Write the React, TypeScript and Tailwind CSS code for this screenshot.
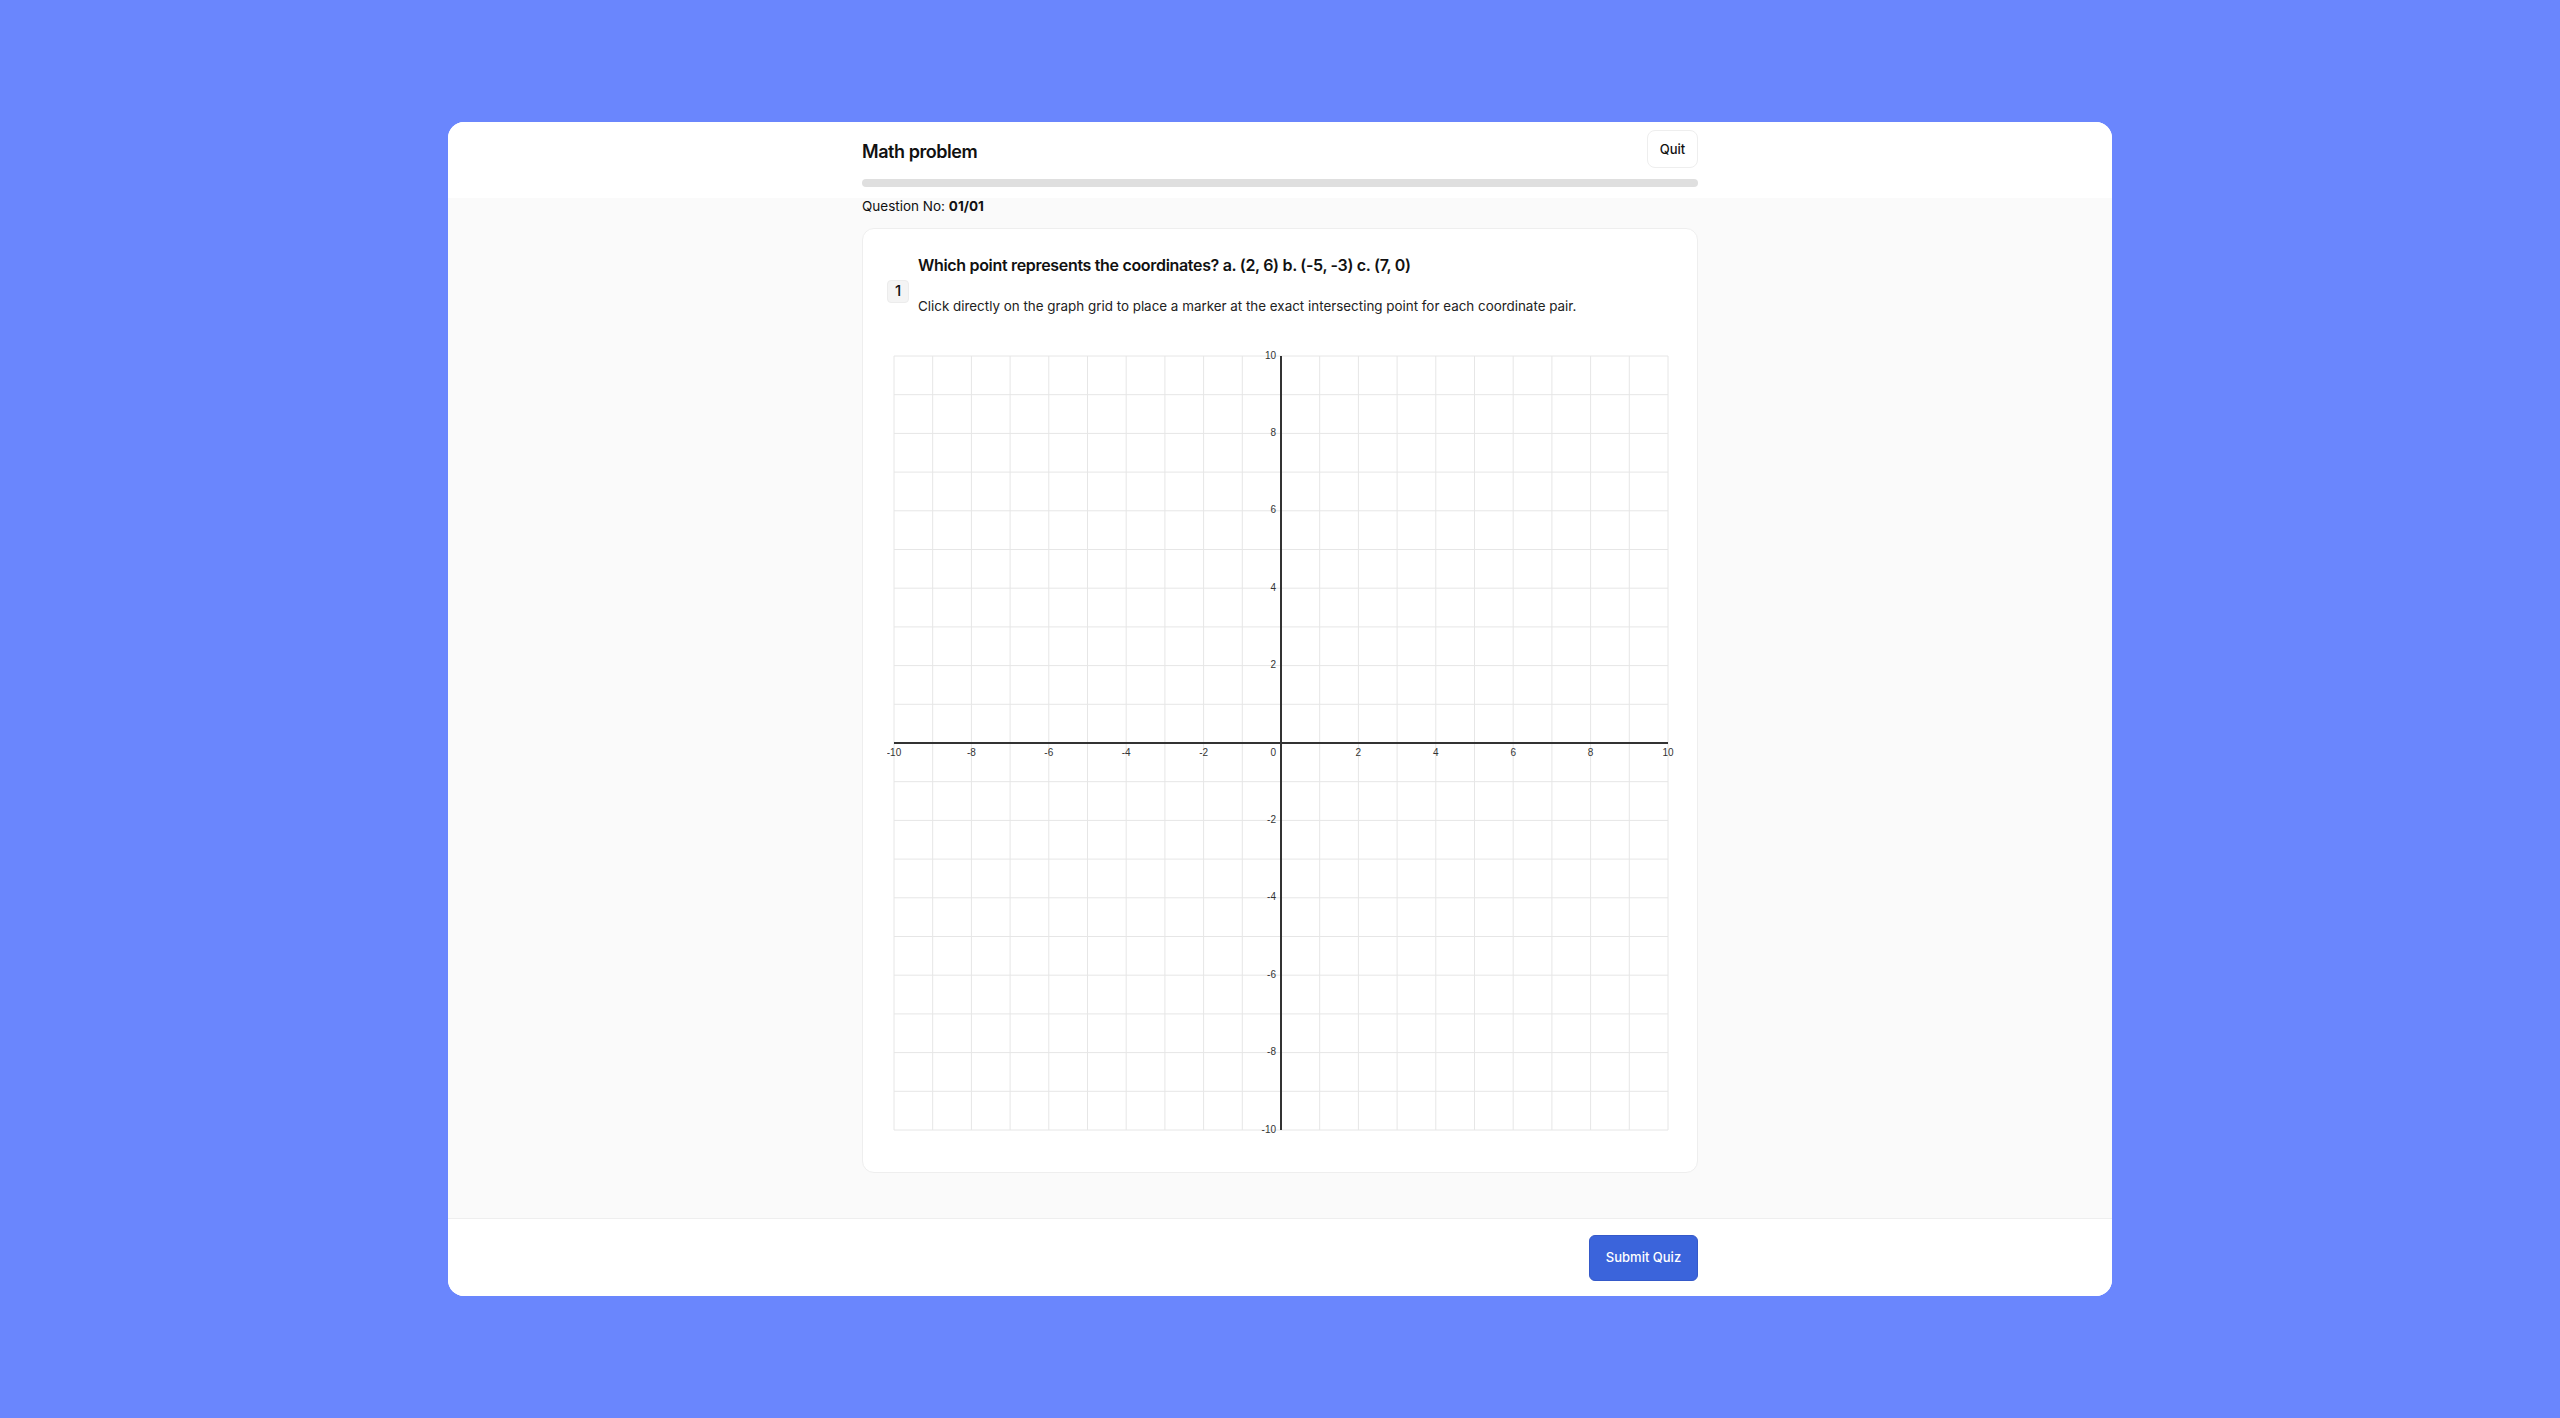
import React from 'react';

const CELL = 38.7;
const OX = 7;
const OY = 15;
const SIZE = CELL * 20;
const AXIS_X = OX + CELL * 10;
const AXIS_Y = OY + CELL * 10;
const TICKS = [-10, -8, -6, -4, -2, 2, 4, 6, 8, 10];

function Graph() {
  const lines = Array.from({ length: 21 }, (_, i) => i);
  return (
    <svg width={788} height={807} viewBox="0 0 788 807" className="block">
      {lines.map((i) => (
        <line
          key={`v${i}`}
          x1={OX + i * CELL}
          x2={OX + i * CELL}
          y1={OY}
          y2={OY + SIZE}
          stroke="#e6e6e6"
          strokeWidth={1}
        />
      ))}
      {lines.map((i) => (
        <line
          key={`h${i}`}
          x1={OX}
          x2={OX + SIZE}
          y1={OY + i * CELL}
          y2={OY + i * CELL}
          stroke="#e6e6e6"
          strokeWidth={1}
        />
      ))}
      <line x1={OX} x2={OX + SIZE} y1={AXIS_Y} y2={AXIS_Y} stroke="#333" strokeWidth={2} />
      <line x1={AXIS_X} x2={AXIS_X} y1={OY} y2={OY + SIZE} stroke="#333" strokeWidth={2} />
      <g fontFamily='"Liberation Sans", Arial, sans-serif' fontSize={10} fill="#333">
        {TICKS.map((v) => (
          <text key={`x${v}`} x={AXIS_X + v * CELL} y={AXIS_Y + 10} textAnchor="middle" dominantBaseline="middle">
            {v}
          </text>
        ))}
        {TICKS.map((v) => (
          <text key={`y${v}`} x={AXIS_X - 5} y={AXIS_Y - v * CELL} textAnchor="end" dominantBaseline="middle">
            {v}
          </text>
        ))}
        <text x={AXIS_X - 5} y={AXIS_Y + 10} textAnchor="end" dominantBaseline="middle">
          0
        </text>
      </g>
    </svg>
  );
}

export default function App() {
  return (
    <div
      className="flex h-[1418px] w-full items-center justify-center bg-[#6a86fd] text-[#111]"
      style={{ fontFamily: 'Inter, "Noto Sans", sans-serif' }}
    >
      <div className="flex h-[1174px] w-[1664px] flex-col overflow-hidden rounded-2xl bg-white">
        <header className="flex justify-center bg-white pt-2 pb-[11px]">
          <div className="flex w-[836px] flex-col gap-[11px]">
            <div className="flex items-center justify-between">
              <h1 className="pt-[5px] text-[18px] leading-7 font-semibold tracking-tight">Math problem</h1>
              <button className="h-[38px] w-[51px] rounded-lg border border-[#eeeeee] bg-white pt-[2px] text-[13px] font-medium">
                Quit
              </button>
            </div>
            <div className="h-2 w-full rounded-full bg-[#dfdfdf]" />
          </div>
        </header>

        <main className="flex flex-1 justify-center bg-[#fafafa]">
          <div className="w-[836px]">
            <p className="text-[13.5px] leading-4">
              Question No: <span className="font-bold">01/01</span>
            </p>
            <section className="mt-[14px] rounded-xl border border-[#eeeeee] bg-white p-6">
              <div className="flex items-center gap-[9px]">
                <span className="mt-[14px] flex h-[23px] w-[22px] items-center justify-center rounded border border-[#ececec] bg-[#f4f4f4] text-[15px] font-medium">
                  1
                </span>
                <div>
                  <h2 className="text-[16px] leading-6 font-semibold tracking-[-0.32px]">
                    Which point represents the coordinates? a. (2, 6) b. (-5, -3) c. (7, 0)
                  </h2>
                  <p className="mt-[19px] text-[13.4px] leading-5 text-[#222]">
                    Click directly on the graph grid to place a marker at the exact intersecting point for each
                    coordinate pair.
                  </p>
                </div>
              </div>
              <div className="mt-[25px]">
                <Graph />
              </div>
            </section>
          </div>
        </main>

        <footer className="flex h-[78px] shrink-0 items-center justify-center border-t border-[#eeeeee] bg-white">
          <div className="flex w-[836px] justify-end">
            <button className="h-[46px] w-[109px] rounded-md border border-[#3559c9] bg-[#3b64db] text-[13px] font-medium text-white">
              Submit Quiz
            </button>
          </div>
        </footer>
      </div>
    </div>
  );
}
